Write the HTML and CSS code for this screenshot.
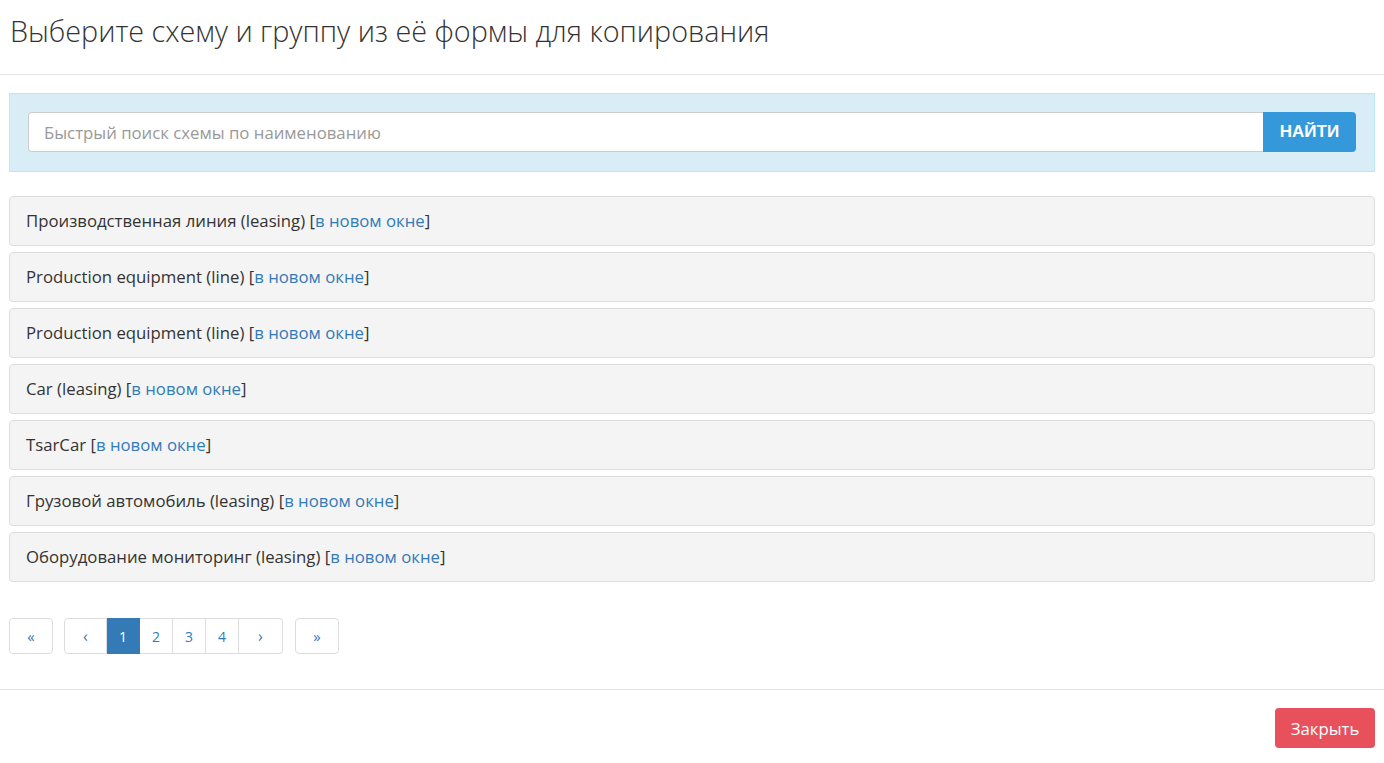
FILE: index.html
```html
<!DOCTYPE html>
<html lang="ru">
<head>
    <meta charset="UTF-8">
    <meta name="viewport" content="width=device-width, initial-scale=1.0">
    <title>Копирование схемы</title>
    <link rel="stylesheet" href="styles.css">
</head>
<body>
    <div class="modal-header">
        <h1>Выберите схему и группу из её формы для копирования</h1>
    </div>

    <div class="modal-body">
        <form class="search-panel">
            <input type="text" class="search-input" placeholder="Быстрый поиск схемы по наименованию">
            <button type="submit" class="search-btn">НАЙТИ</button>
        </form>

        <div class="scheme-list">
            <div class="scheme-item">Производственная линия (leasing) [<a href="#">в новом окне</a>]</div>
            <div class="scheme-item">Production equipment (line) [<a href="#">в новом окне</a>]</div>
            <div class="scheme-item">Production equipment (line) [<a href="#">в новом окне</a>]</div>
            <div class="scheme-item">Car (leasing) [<a href="#">в новом окне</a>]</div>
            <div class="scheme-item">TsarCar [<a href="#">в новом окне</a>]</div>
            <div class="scheme-item">Грузовой автомобиль (leasing) [<a href="#">в новом окне</a>]</div>
            <div class="scheme-item">Оборудование мониторинг (leasing) [<a href="#">в новом окне</a>]</div>
        </div>

        <div class="pager">
            <a href="#" class="page-btn single">&laquo;</a>
            <div class="page-group">
                <a href="#" class="page-btn prev">&lsaquo;</a>
                <a href="#" class="page-btn active">1</a>
                <a href="#" class="page-btn">2</a>
                <a href="#" class="page-btn">3</a>
                <a href="#" class="page-btn">4</a>
                <a href="#" class="page-btn next">&rsaquo;</a>
            </div>
            <a href="#" class="page-btn single">&raquo;</a>
        </div>
    </div>

    <div class="modal-footer">
        <button type="button" class="close-btn">Закрыть</button>
    </div>
</body>
</html>
```

FILE: styles.css
```css
body {
    margin: 0;
    background-color: #fff;
    color: #333;
    font-family: "Open Sans", sans-serif;
    font-size: 16.75px;
}

.modal-header {
    padding: 11px 10px 0 10px;
    height: 63px;
    border-bottom: 1px solid #e5e5e5;
}

h1 {
    margin: 0;
    font-size: 28.75px;
    font-weight: 300;
    line-height: 40px;
    color: #333;
}

.modal-body {
    padding: 18px 9px 0 9px;
    height: 596px;
    border-bottom: 1px solid #e5e5e5;
}

.search-panel {
    display: flex;
    background-color: #d9edf7;
    border: 1px solid #bce8f1;
    padding: 18px 18px 19px 18px;
    margin: 0;
}

.search-input {
    flex: 1;
    height: 40px;
    box-sizing: border-box;
    padding: 6px 15px;
    font-family: "Open Sans", sans-serif;
    font-size: 16.75px;
    color: #555;
    border: 1px solid #ccc;
    border-right: none;
    border-radius: 4px 0 0 4px;
    outline: none;
}

.search-input::placeholder {
    color: #999;
}

.search-btn {
    width: 93px;
    height: 40px;
    background-color: #3498db;
    color: white;
    border: none;
    border-radius: 0 4px 4px 0;
    font-family: "Liberation Sans", Arial, sans-serif;
    font-size: 17px;
    font-weight: bold;
    cursor: pointer;
}

.scheme-list {
    display: flex;
    flex-direction: column;
    gap: 6px;
    margin-top: 24px;
}

.scheme-item {
    height: 50px;
    box-sizing: border-box;
    background-color: #f4f4f4;
    border: 1px solid #ddd;
    border-radius: 4px;
    padding: 0 16px;
    display: flex;
    align-items: center;
    line-height: 22px;
    white-space: pre;
}

.scheme-item a {
    color: #337ab7;
    text-decoration: none;
}

.pager {
    display: flex;
    gap: 11px;
    margin-top: 36px;
}

.page-group {
    display: flex;
}

.page-btn {
    display: flex;
    align-items: center;
    justify-content: center;
    width: 33px;
    height: 36px;
    box-sizing: border-box;
    border: 1px solid #ddd;
    border-left: none;
    color: #337ab7;
    text-decoration: none;
    font-size: 14px;
    background-color: #fff;
}

.page-btn.single {
    width: 44px;
    border-left: 1px solid #ddd;
    border-radius: 4px;
    font-size: 15px;
}

.page-btn.single:last-child {
    margin-left: 1px;
}

.page-btn.prev {
    width: 43px;
    border-left: 1px solid #ddd;
    border-radius: 4px 0 0 4px;
    font-size: 16px;
}

.page-btn.next {
    width: 44px;
    border-radius: 0 4px 4px 0;
    font-size: 16px;
}

.page-btn.active {
    background-color: #337ab7;
    border-color: #337ab7;
    color: #fff;
}

.modal-footer {
    display: flex;
    justify-content: flex-end;
    padding: 18px 9px;
}

.close-btn {
    background-color: #e8515c;
    color: white;
    border: none;
    border-radius: 4px;
    width: 100px;
    height: 40px;
    font-family: "Open Sans", sans-serif;
    font-size: 16.75px;
    cursor: pointer;
}
```
